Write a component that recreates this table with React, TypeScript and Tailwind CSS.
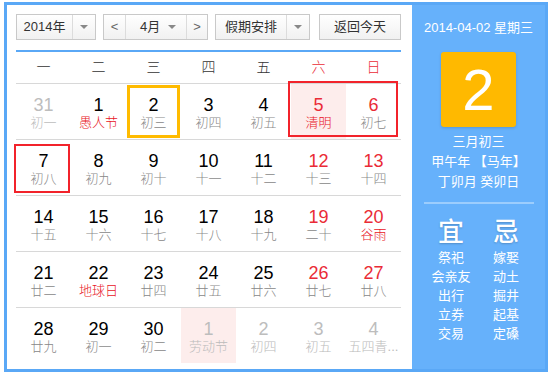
import type { ReactNode } from 'react';

type Day = {
  n: number;
  lunar: string;
  other?: boolean;
  weekend?: boolean;
  festival?: boolean;
  today?: boolean;
  pink?: boolean;
  box?: 'single' | 'left' | 'right';
};

const weekdays = ['一', '二', '三', '四', '五', '六', '日'];

const weeks: Day[][] = [
  [
    { n: 31, lunar: '初一', other: true },
    { n: 1, lunar: '愚人节', festival: true },
    { n: 2, lunar: '初三', today: true },
    { n: 3, lunar: '初四' },
    { n: 4, lunar: '初五' },
    { n: 5, lunar: '清明', weekend: true, festival: true, pink: true, box: 'left' },
    { n: 6, lunar: '初七', weekend: true, box: 'right' },
  ],
  [
    { n: 7, lunar: '初八', box: 'single' },
    { n: 8, lunar: '初九' },
    { n: 9, lunar: '初十' },
    { n: 10, lunar: '十一' },
    { n: 11, lunar: '十二' },
    { n: 12, lunar: '十三', weekend: true },
    { n: 13, lunar: '十四', weekend: true },
  ],
  [
    { n: 14, lunar: '十五' },
    { n: 15, lunar: '十六' },
    { n: 16, lunar: '十七' },
    { n: 17, lunar: '十八' },
    { n: 18, lunar: '十九' },
    { n: 19, lunar: '二十', weekend: true },
    { n: 20, lunar: '谷雨', weekend: true, festival: true },
  ],
  [
    { n: 21, lunar: '廿二' },
    { n: 22, lunar: '地球日', festival: true },
    { n: 23, lunar: '廿四' },
    { n: 24, lunar: '廿五' },
    { n: 25, lunar: '廿六' },
    { n: 26, lunar: '廿七', weekend: true },
    { n: 27, lunar: '廿八', weekend: true },
  ],
  [
    { n: 28, lunar: '廿九' },
    { n: 29, lunar: '初一' },
    { n: 30, lunar: '初二' },
    { n: 1, lunar: '劳动节', other: true, pink: true },
    { n: 2, lunar: '初四', other: true },
    { n: 3, lunar: '初五', other: true },
    { n: 4, lunar: '五四青...', other: true },
  ],
];

const good = ['祭祀', '会亲友', '出行', '立券', '交易'];
const bad = ['嫁娶', '动土', '掘井', '起基', '定磉'];

function Caret() {
  return <span className="h-0 w-0 border-x-[4px] border-t-[4px] border-x-transparent border-t-[#888]" />;
}

function Box({ className, children }: { className: string; children: ReactNode }) {
  return (
    <div className={`flex h-[26px] items-stretch border border-[#c9c9c9] bg-gradient-to-b from-white to-[#f1f1f1] text-[13px] text-[#333] ${className}`}>
      {children}
    </div>
  );
}

function Cell({ day }: { day: Day }) {
  let num = 'text-black';
  let lunar = 'text-[#888]';
  if (day.weekend) num = 'text-[#ea2b36]';
  if (day.festival) lunar = 'text-[#e8141e]';
  if (day.other) {
    num = 'text-[#bdbdbd]';
    lunar = 'text-[#bbb]';
  }

  return (
    <div className={`relative flex h-[55px] flex-col items-center pt-[11px] ${day.pink ? 'bg-[#fdedec]' : ''}`}>
      <span className={`text-[18px] leading-5 ${num}`}>{day.n}</span>
      <span className={`whitespace-nowrap text-[13px] font-light leading-4 ${lunar}`}>{day.lunar}</span>
      {day.today && <div className="absolute inset-[1px] border-[3px] border-[#ffbb00]" />}
      {day.box === 'single' && <div className="absolute bottom-[2px] left-[-2px] right-[1px] top-[4px] border-2 border-[#f2232b]" />}
      {day.box === 'left' && <div className="absolute bottom-[2px] left-[-3px] right-0 top-[-3px] border-2 border-r-0 border-[#f2232b]" />}
      {day.box === 'right' && <div className="absolute bottom-[2px] left-0 right-[3px] top-[-3px] border-2 border-l-0 border-[#f2232b]" />}
    </div>
  );
}

export default function App() {
  return (
    <div className="h-[377px] w-[548px] bg-white pl-1 pt-0.5 font-['Liberation_Sans','Noto_Sans_CJK_SC',sans-serif]">
      <div className="flex h-[370px] w-[544px] border-[3px] border-[#5aa8f6]">
        <div className="w-[405px] bg-white pl-[9px] pt-[9px]">
          <div className="flex items-center">
            <Box className="w-[80px]">
              <span className="flex w-[55px] items-center justify-center">2014年</span>
              <span className="flex flex-1 items-center justify-center border-l border-[#dcdcdc]"><Caret /></span>
            </Box>
            <Box className="ml-[7px] w-[105px]">
              <span className="flex w-[22px] items-center justify-center border-r border-[#dcdcdc] text-[#666]">&lt;</span>
              <span className="flex flex-1 items-center justify-between pl-[14px] pr-[10px]">
                4月
                <Caret />
              </span>
              <span className="flex w-[21px] items-center justify-center border-l border-[#dcdcdc] text-[#666]">&gt;</span>
            </Box>
            <Box className="ml-[7px] w-[95px]">
              <span className="flex w-[70px] items-center justify-center">假期安排</span>
              <span className="flex flex-1 items-center justify-center border-l border-[#dcdcdc]"><Caret /></span>
            </Box>
            <Box className="ml-[9px] w-[82px] justify-center">
              <span className="flex items-center">返回今天</span>
            </Box>
          </div>

          <div className="mt-[10px] w-[385px] border-t-2 border-[#5aa8f6]">
            <div className="grid h-[32px] grid-cols-7 border-b border-[#d8d8d8] text-[14px] font-light">
              {weekdays.map((w, i) => (
                <div key={w} className={`flex items-center justify-center ${i > 4 ? 'text-[#ea2b36]' : 'text-[#333]'}`}>
                  {w}
                </div>
              ))}
            </div>
            {weeks.map((week, i) => (
              <div key={i} className={`grid grid-cols-7 ${i < weeks.length - 1 ? 'border-b border-[#d8d8d8]' : ''}`}>
                {week.map((day, j) => (
                  <Cell key={j} day={day} />
                ))}
              </div>
            ))}
          </div>
        </div>

        <div className="flex flex-1 flex-col items-center bg-[#66b1fb] pt-[15px] text-white">
          <div className="text-[13px] leading-4">2014-04-02 星期三</div>
          <div className="mt-4 flex h-[75px] w-[75px] items-center justify-center rounded-[3px] bg-[#ffb900] text-[58px] leading-none shadow-[0_1px_3px_rgba(0,0,0,0.15)]">
            2
          </div>
          <div className="mt-[5px] flex flex-col items-center text-[13px] leading-5">
            <span>三月初三</span>
            <span>甲午年 【马年】</span>
            <span>丁卯月 癸卯日</span>
          </div>
          <div className="mt-[10px] h-[2px] w-[110px] bg-[#9ccdfd]" />
          <div className="mt-[14px] grid w-[110px] grid-cols-2">
            {[{ t: '宜', items: good }, { t: '忌', items: bad }].map((col) => (
              <div key={col.t} className="flex flex-col items-center">
                <span className="text-[26px] font-medium leading-7 [text-shadow:0_1px_2px_rgba(0,0,0,0.2)]">{col.t}</span>
                <div className="mt-[2px] flex flex-col items-center text-[13px] leading-[19px]">
                  {col.items.map((it) => (
                    <span key={it}>{it}</span>
                  ))}
                </div>
              </div>
            ))}
          </div>
        </div>
      </div>
    </div>
  );
}
